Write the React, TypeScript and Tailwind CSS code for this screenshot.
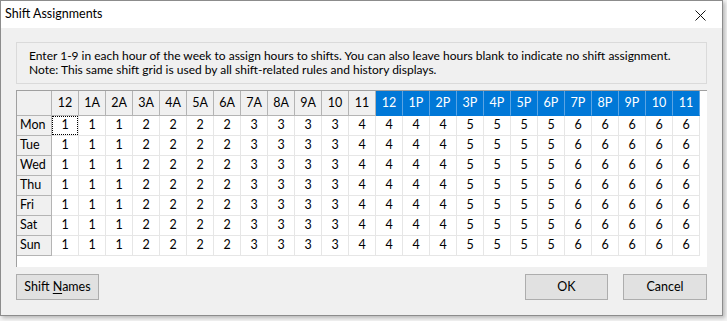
import React from 'react';

const HOURS = ['12', '1A', '2A', '3A', '4A', '5A', '6A', '7A', '8A', '9A', '10', '11', '12', '1P', '2P', '3P', '4P', '5P', '6P', '7P', '8P', '9P', '10', '11'];
const DAYS = ['Mon', 'Tue', 'Wed', 'Thu', 'Fri', 'Sat', 'Sun'];
// shift number for each hour of the day
const SHIFTS = [1, 1, 1, 2, 2, 2, 2, 3, 3, 3, 3, 4, 4, 4, 4, 5, 5, 5, 5, 6, 6, 6, 6, 6];

const Button: React.FC<{ className?: string; children: React.ReactNode }> = ({ className = '', children }) => (
  <button className={`h-[26px] bg-[#e1e1e1] border border-[#adadad] text-[12.5px] text-black ${className}`}>
    {children}
  </button>
);

const App: React.FC = () => {
  return (
    <div className="w-[727px] h-[321px] bg-[#f4f4f4] overflow-hidden" style={{ fontFamily: 'Lato, "Noto Sans", sans-serif' }}>
      <div className="w-[723px] h-[316px] flex flex-col bg-[#f0f0f0] border border-[#8c8c8c] shadow-[2px_2px_4px_rgba(0,0,0,0.25)]">
        {/* Title bar */}
        <div className="h-[27px] bg-white flex items-center justify-between pl-[4px] pr-[16px] shrink-0">
          <span className="text-[12.5px] text-black">Shift Assignments</span>
          <svg width="11" height="11" viewBox="0 0 11 11" className="mt-[1px]">
            <path d="M0.5 0.5 L10.5 10.5 M10.5 0.5 L0.5 10.5" stroke="#111" strokeWidth="1" />
          </svg>
        </div>

        <div className="flex flex-col px-[15px] pt-[14px]">
          {/* Info box */}
          <div className="h-[42px] border border-[#dadada] bg-[#f0f0f0] px-[12px] pt-[6px] text-[12px] leading-[14px] text-black whitespace-nowrap">
            <div>Enter 1-9 in each hour of the week to assign hours to shifts. You can also leave hours blank to indicate no shift assignment.</div>
            <div>Note: This same shift grid is used by all shift-related rules and history displays.</div>
          </div>

          {/* Grid */}
          <div className="mt-[6px] h-[177px] bg-white border-l border-t border-[#a0a0a0]">
            <div className="grid grid-cols-[35px_repeat(24,27px)] text-[12.5px] text-black">
              <div className="h-[25px] bg-[#f0f0f0] border-r border-b border-[#b4b4b4]" />
              {HOURS.map((h, i) => (
                <div
                  key={i}
                  className={
                    i >= 12
                      ? 'h-[25px] flex items-center justify-center bg-[#0078d7] text-white border-r border-b border-r-[#5aa4e4] border-b-[#0078d7]'
                      : 'h-[25px] flex items-center justify-center bg-[#f0f0f0] border-r border-b border-[#b4b4b4]'
                  }
                >
                  {h}
                </div>
              ))}
              {DAYS.map((d, r) => (
                <React.Fragment key={d}>
                  <div className="h-[20px] bg-[#f0f0f0] border-r border-b border-[#b4b4b4] pl-[3px] flex items-center">{d}</div>
                  {SHIFTS.map((s, c) => (
                    <div key={c} className="h-[20px] border-r border-b border-[#e6e6e6] flex items-center justify-center">
                      {r === 0 && c === 0 ? (
                        <span className="w-full h-full flex items-center justify-center border border-dotted border-black">{s}</span>
                      ) : (
                        s
                      )}
                    </div>
                  ))}
                </React.Fragment>
              ))}
            </div>
          </div>

          {/* Buttons */}
          <div className="mt-[7px] flex items-center">
            <Button className="w-[83px]">
              Shift <span className="underline underline-offset-2">N</span>ames
            </Button>
            <div className="flex-1" />
            <Button className="w-[83px]">OK</Button>
            <Button className="w-[84px] ml-[15px]">Cancel</Button>
          </div>
        </div>
      </div>
    </div>
  );
};

export default App;
